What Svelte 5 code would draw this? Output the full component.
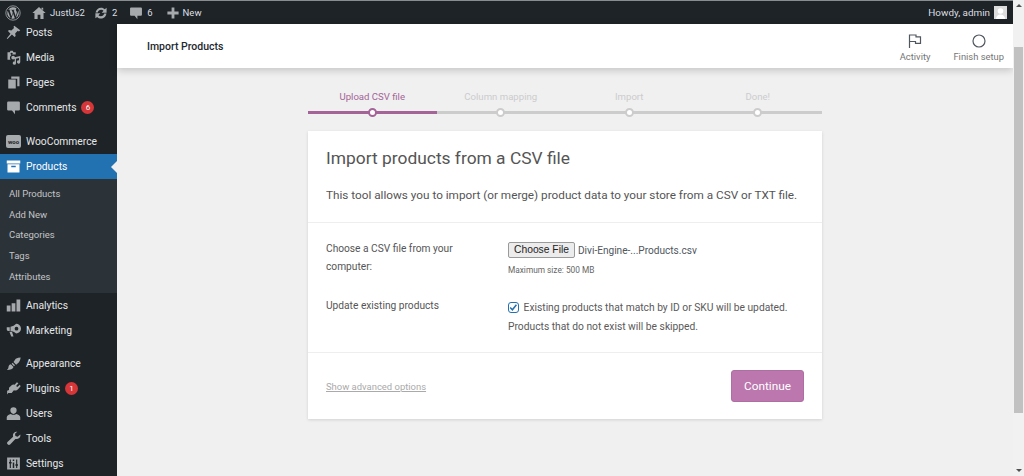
<script>
  const menuTop = [
    { label: 'Posts', icon: 'posts' },
    { label: 'Media', icon: 'media' },
    { label: 'Pages', icon: 'pages' },
    { label: 'Comments', icon: 'comments', badge: 6 },
  ]
  const subItems = ['All Products', 'Add New', 'Categories', 'Tags', 'Attributes']
  const menuBottom = [
    { label: 'Appearance', icon: 'appearance' },
    { label: 'Plugins', icon: 'plugins', badge: 1 },
    { label: 'Users', icon: 'users' },
    { label: 'Tools', icon: 'tools' },
    { label: 'Settings', icon: 'settings' },
  ]
  const steps = [
    { label: 'Upload CSV file', active: true },
    { label: 'Column mapping' },
    { label: 'Import' },
    { label: 'Done!' },
  ]
</script>

{#snippet icon(name)}
  <svg class="mi" viewBox="0 0 20 20" aria-hidden="true">
    {#if name === 'posts'}
      <path d="M11 1l8 6-1.800 1.500-1.600-.7-3.400 3.600.7 3.100-1.500 1.500-3.500-3.500L2 18.500 1 18l5-6.500-3.400-3.400L4 6.600l3.200.7L10.700 4 10 2.400z" />
    {:else if name === 'media'}
      <path fill-rule="evenodd" d="M2 3h3l1-2h3l1 2h3v3H9.500A4.500 4.500 0 0 0 6 13H2zm5.500.500a1.500 1.500 0 1 0 0 3 1.500 1.500 0 0 0 0-3z" />
      <path d="M9.500 7.500a2.500 2.500 0 1 1 0 5 2.500 2.500 0 0 1 0-5zM19 8v8a2.200 2.200 0 1 1-1.700-2.100V10.500l-4 1V17.500a2.200 2.200 0 1 1-1.700-2.100V9.500z" />
    {:else if name === 'pages'}
      <path d="M7 2h11v13h-3V5H7zM3 6h10v12H3z" />
    {:else if name === 'comments'}
      <path d="M3 2h14a1.500 1.500 0 0 1 1.500 1.500v9A1.500 1.500 0 0 1 17 14h-5v5l-4-5H3a1.500 1.500 0 0 1-1.500-1.500v-9A1.500 1.500 0 0 1 3 2z" />
    {:else if name === 'analytics'}
      <path d="M1 10h5v8H1zM7.500 7h5v11h-5zM14 2h5v16h-5z" />
    {:else if name === 'marketing'}
      <path fill-rule="evenodd" d="M13.500 1a6.500 6.500 0 0 1 0 13c-2-2-5-3-7.500-3.200V5C9 4.500 11.500 3 13.500 1zm.500 4a2.500 2.500 0 1 0 0 5 2.500 2.500 0 0 0 0-5z" />
      <path d="M1 5.500h4v5.200H3.500A2.500 2.500 0 0 1 1 8.500zM4.500 11.500h3.500l2 6.500H7z" />
    {:else if name === 'appearance'}
      <path d="M13 3.500c2-1 4.500-1.500 6.500-1.500-.2 2-1 4.500-2.500 6.500l-3.500 3-3.500-3.500zM8.800 9l3.200 3.200-1.300 1.300-3.200-3.200zM6.500 11l3.500 3.500c-.5 2.500-4 4-9 4 2.500-1.500 2-3.500 2.500-5s1.800-2.300 3-2.500z" />
    {:else if name === 'plugins'}
      <path d="M14.500 1.500l2 1.500-3 3.500 1.500 1.500 3.500-3 1 2-3.500 4a4.500 4.500 0 0 1-5.500 1.200l-3 3.800H3l-1.500 2v-5l2.500-1V9l3.500-3.500a4.500 4.500 0 0 1 4-.5z" />
    {:else if name === 'users'}
      <path d="M10 1.500a4.200 4.200 0 0 1 4.200 4.200c0 2.700-1.900 4.800-4.200 4.800S5.800 8.400 5.800 5.700A4.200 4.200 0 0 1 10 1.500zM6.500 10.500c2 1.500 5 1.500 7 0 3 .5 5.500 2.300 5.500 4.500v3.500H1V15c0-2.200 2.500-4 5.500-4.500z" />
    {:else if name === 'tools'}
      <path d="M15 1a5 5 0 0 0-5.500 6.500L2 14.500a2.500 2.500 0 0 0 3.500 3.500l7-7.500a5 5 0 0 0 6.500-6L15.500 7.500l-3-1-.5-3z" />
    {:else if name === 'settings'}
      <path fill-rule="evenodd" d="M1.500 2h17v16h-17zM5 4.500V8H4v2h1v6h1.500v-6h1V8h-1V4.500zm8.500 0V11h-1v2h1v3H15v-3h1v-2h-1V4.500zM9 4.500v2H11v-2zM9 8.500V16H11V8.500z" />
    {/if}
  </svg>
{/snippet}

<div class="wp">
  <div class="page">
    <header class="adminbar">
      <svg class="wplogo" viewBox="0 0 20 20" aria-hidden="true">
        <circle cx="10" cy="10" r="9" fill="none" stroke="currentColor" stroke-width="1" />
        <path d="M2.900 10a7.100 7.100 0 0 0 4 6.400L3.500 7.100A7 7 0 0 0 2.900 10zM14.800 9.600c0-.9-.3-1.500-.6-2-.4-.6-.7-1.100-.7-1.700 0-.6.5-1.200 1.200-1.200h.1A7.100 7.100 0 0 0 4.100 6.100h.5c.7 0 1.900-.1 1.900-.1.400 0 .4.500 0 .6 0 0-.4 0-.8.1l2.500 7.400 1.500-4.500-1.100-2.900c-.4 0-.7-.1-.7-.1-.4 0-.3-.6 0-.6 0 0 1.200.1 1.900.1s1.900-.1 1.900-.1c.4 0 .4.500 0 .6 0 0-.4 0-.8.1l2.500 7.400.7-2.300c.3-1 .5-1.600.5-2.200zM10.100 10.600l-2.100 6.200a7.100 7.100 0 0 0 4.400-.1l-.1-.1zM16.300 6.500c0 .2.100.5.100.7 0 .7-.1 1.500-.5 2.500l-2.200 6.300a7.100 7.100 0 0 0 2.600-9.500z" />
      </svg>
      <span class="abitem site">
        <svg viewBox="0 0 20 20" class="abi" aria-hidden="true"><path d="M10 1.500l9.500 8.500h-3v8.500H12V12.500H8v6H3.500V10h-3zM13.500 2.500h2.500v3.500l-2.500-2.200z" /></svg>
        JustUs2
      </span>
      <span class="abitem updates">
        <svg viewBox="0 0 20 20" class="abi" aria-hidden="true"><path d="M10.200 2.500c2 0 3.900.8 5.200 2.200L18 2.500v7h-7l2.600-2.600c-.9-.9-2.100-1.400-3.400-1.400-2.400 0-4.300 1.600-4.800 3.800H2.200C2.800 5.500 6.100 2.500 10.200 2.500zM2 10.500h7l-2.600 2.600c.9.900 2.100 1.400 3.400 1.400 2.400 0 4.300-1.600 4.800-3.800h3.200c-.6 4.300-3.900 7.300-8 7.300-2 0-3.900-.8-5.200-2.200L2 17.500z" /></svg>
        2
      </span>
      <span class="abitem comments">
        <svg viewBox="0 0 20 20" class="abi" aria-hidden="true"><path d="M3 2h14a1.500 1.500 0 0 1 1.500 1.500v9A1.500 1.500 0 0 1 17 14h-5v5l-4-5H3a1.500 1.500 0 0 1-1.500-1.500v-9A1.500 1.500 0 0 1 3 2z" /></svg>
        6
      </span>
      <span class="abitem new">
        <svg viewBox="0 0 20 20" class="abi" aria-hidden="true"><path d="M8 2h4v6h6v4h-6v6H8v-6H2V8h6z" /></svg>
        New
      </span>
      <span class="howdy">Howdy, admin <span class="avatar"><svg viewBox="0 0 13 13" aria-hidden="true"><rect width="13" height="13" fill="#dcdcdc" /><circle cx="6.500" cy="5" r="2.800" fill="#fff" /><path d="M2 13c0-3 2-4.500 4.500-4.500S11 10 11 13z" fill="#fff" /></svg></span></span>
    </header>

    <div class="body">
      <aside class="sidebar">
        <nav>
          {#each menuTop as m}
            <div class="mitem">
              {@render icon(m.icon)}
              <span>{m.label}</span>
              {#if m.badge}<b class="badge">{m.badge}</b>{/if}
            </div>
          {/each}
          <div class="mitem woo">
            <span class="wooicon">woo</span>
            <span>WooCommerce</span>
          </div>
          <div class="mitem current">
            <svg class="mi" viewBox="0 0 20 20" aria-hidden="true"><path fill-rule="evenodd" d="M1 2h18v4H1zM2 7h16v11H2zM7 9v2h6V9z" /></svg>
            <span>Products</span>
          </div>
          <ul class="sub">
            {#each subItems as s}<li>{s}</li>{/each}
          </ul>
          <div class="mitem">{@render icon('analytics')}<span>Analytics</span></div>
          <div class="mitem">{@render icon('marketing')}<span>Marketing</span></div>
          <div class="sep"></div>
          {#each menuBottom as m}
            <div class="mitem">
              {@render icon(m.icon)}
              <span>{m.label}</span>
              {#if m.badge}<b class="badge">{m.badge}</b>{/if}
            </div>
          {/each}
        </nav>
      </aside>

      <main class="content">
        <div class="wcbar">
          <h1>Import Products</h1>
          <div class="wcactions">
            <div class="wcaction">
              <svg viewBox="0 0 14 14" aria-hidden="true"><path d="M1.500 14V1h6.500v1.800h4.500v6.500H7.500V7.500h-6" fill="none" stroke="#50575e" stroke-width="1.200" /></svg>
              <span>Activity</span>
            </div>
            <div class="wcaction">
              <svg viewBox="0 0 14 14" aria-hidden="true"><circle cx="7" cy="7" r="6" fill="none" stroke="#50575e" stroke-width="1.200" /></svg>
              <span>Finish setup</span>
            </div>
          </div>
        </div>

        <div class="wizard">
          <ol class="steps">
            {#each steps as s}
              <li class:active={s.active}>
                <span class="steplabel">{s.label}</span>
                <span class="dot"></span>
              </li>
            {/each}
          </ol>

          <section class="card">
            <header class="cardhead">
              <h2>Import products from a CSV file</h2>
              <p>This tool allows you to import (or merge) product data to your store from a CSV or TXT file.</p>
            </header>
            <div class="cardbody">
              <div class="row first">
                <span class="rowlabel">Choose a CSV file from your computer:</span>
                <div>
                  <div class="file"><span class="filebtn">Choose File</span><span class="fname">Divi-Engine-...Products.csv</span></div>
                  <small>Maximum size: 500 MB</small>
                </div>
              </div>
              <div class="row">
                <span class="rowlabel">Update existing products</span>
                <div class="checktext">
                  <span class="check"><svg viewBox="0 0 9 9" aria-hidden="true"><path d="M1.200 4.500l2.200 2.300 4-5" fill="none" stroke="#2271b1" stroke-width="1.500" /></svg></span>
                  Existing products that match by ID or SKU will be updated. Products that do not exist will be skipped.
                </div>
              </div>
            </div>
            <footer class="cardfoot">
              <span class="advanced">Show advanced options</span>
              <span class="continue">Continue</span>
            </footer>
          </section>
        </div>
      </main>
    </div>
  </div>

  <div class="scrollbar">
    <span class="arrow up"></span>
    <span class="thumb"></span>
    <span class="arrow down"></span>
  </div>
</div>

<style>
  :global(body) {
    margin: 0;
    overflow: hidden;
  }
  .wp {
    width: 1024px;
    height: 476px;
    overflow: hidden;
    display: flex;
    font-family: Roboto, 'Noto Sans', sans-serif;
    background: #f0f0f1;
    color: #50575e;
  }
  .page {
    flex: 1;
    min-width: 0;
    display: flex;
    flex-direction: column;
  }
  .adminbar {
    height: 24px;
    flex: none;
    box-sizing: border-box;
    background: #1d2327;
    border-top: 1px solid #8a8d90;
    display: flex;
    align-items: center;
    color: #dcdfe1;
    font-size: 9.500px;
    padding-right: 6px;
  }
  .wplogo {
    width: 16px;
    height: 16px;
    fill: #a7aaad;
    color: #a7aaad;
    margin-left: 5px;
  }
  .abitem {
    display: flex;
    align-items: center;
    gap: 4px;
  }
  .abi {
    width: 14px;
    height: 14px;
    fill: #a7aaad;
  }
  .site {
    margin-left: 11px;
  }
  .updates {
    margin-left: 9px;
  }
  .comments {
    margin-left: 12px;
  }
  .new {
    margin-left: 13px;
    gap: 3px;
  }
  .howdy {
    margin-left: auto;
    display: flex;
    align-items: center;
    gap: 4px;
    font-size: 9.900px;
  }
  .avatar {
    width: 13px;
    height: 13px;
    display: block;
  }
  .avatar svg {
    display: block;
  }
  .body {
    flex: 1;
    display: flex;
    min-height: 0;
  }
  .sidebar {
    width: 117px;
    flex: none;
    background: #1d2327;
    color: #e6e7e8;
    font-size: 10.300px;
    overflow: hidden;
  }
  .mitem {
    height: 25px;
    display: flex;
    align-items: center;
    padding-left: 6px;
    position: relative;
  }
  .mitem:first-child {
    margin-top: -4px;
  }
  .mi {
    width: 15px;
    height: 15px;
    fill: #a7aaad;
    margin-right: 5px;
    flex: none;
  }
  .woo {
    margin-top: 9px;
  }
  .wooicon {
    width: 15px;
    height: 13px;
    border-radius: 2px;
    background: #a7aaad;
    color: #1d2327;
    font-size: 6px;
    font-weight: 700;
    line-height: 13px;
    text-align: center;
    margin-right: 5px;
    flex: none;
  }
  .badge {
    width: 13px;
    height: 13px;
    border-radius: 50%;
    background: #d63638;
    color: #fff;
    font-size: 8px;
    font-weight: 400;
    line-height: 13px;
    text-align: center;
    margin-left: 5px;
  }
  .current {
    background: #2271b1;
    color: #fff;
  }
  .current .mi {
    fill: #fff;
  }
  .current::after {
    content: '';
    position: absolute;
    right: 0;
    top: 7px;
    border: 6px solid transparent;
    border-left: 0;
    border-right-color: #f0f0f1;
  }
  .sub {
    list-style: none;
    margin: 0;
    padding: 5px 0 6px 9px;
    background: #2c3338;
    color: #c3c4c7;
    font-size: 9.500px;
  }
  .sub li {
    height: 20.700px;
    line-height: 20.700px;
  }
  .sep {
    height: 8px;
  }
  .content {
    flex: 1;
    min-width: 0;
  }
  .wcbar {
    height: 44px;
    background: #fff;
    display: flex;
    align-items: center;
    justify-content: space-between;
    padding-left: 30px;
    padding-right: 9px;
    box-shadow: 0 2px 8px rgba(0, 0, 0, 0.2);
    position: relative;
  }
  h1 {
    margin: 0;
    font-size: 10.500px;
    font-weight: 500;
    color: #23282d;
  }
  .wcactions {
    display: flex;
    gap: 23px;
    padding-top: 3px;
  }
  .wcaction {
    display: flex;
    flex-direction: column;
    align-items: center;
    font-size: 9.400px;
    color: #757575;
  }
  .wcaction svg {
    width: 14px;
    height: 14px;
    margin-bottom: 3px;
  }
  .wizard {
    width: 514px;
    margin: 20px 0 0 191px;
  }
  .steps {
    list-style: none;
    margin: 0;
    padding: 0;
    display: grid;
    grid-template-columns: repeat(4, 1fr);
  }
  .steps li {
    position: relative;
    text-align: center;
    color: #ccc;
    font-size: 9.600px;
    height: 23px;
    border-bottom: 3px solid #ccc;
  }
  .steps li.active {
    color: #a46497;
    border-bottom-color: #a46497;
  }
  .steplabel {
    display: block;
    line-height: 18px;
  }
  .dot {
    position: absolute;
    left: 50%;
    bottom: -6px;
    width: 5px;
    height: 5px;
    margin-left: -4.500px;
    border: 2px solid #ccc;
    border-radius: 50%;
    background: #fff;
  }
  .active .dot {
    border-color: #a46497;
  }
  .card {
    background: #fff;
    margin-top: 17px;
    box-shadow: 0 1px 3px rgba(0, 0, 0, 0.13);
  }
  .cardhead {
    padding: 16px 18px 19px;
    border-bottom: 1px solid #eee;
  }
  h2 {
    margin: 0;
    font-size: 17.400px;
    font-weight: 400;
    line-height: 23px;
    color: #555;
  }
  .cardhead p {
    margin: 17px 0 0;
    font-size: 11.750px;
    line-height: 16px;
    color: #555;
    white-space: nowrap;
  }
  .cardbody {
    padding: 17px 18px 0;
    height: 130px;
    box-sizing: border-box;
    border-bottom: 1px solid #eee;
  }
  .row {
    display: grid;
    grid-template-columns: 182px 1fr;
  }
  .first {
    height: 58px;
  }
  .rowlabel {
    line-height: 18px;
    color: #555;
    font-size: 10.200px;
    padding-right: 30px;
  }
  .row:last-child .rowlabel {
    line-height: 16px;
  }
  .file {
    display: flex;
    align-items: center;
    margin-top: 2px;
  }
  .filebtn {
    font-family: 'Liberation Sans', Arial, sans-serif;
    font-size: 10.300px;
    line-height: 14px;
    color: #222;
    background: #ececec;
    border: 1px solid #9a9a9a;
    border-radius: 2px;
    padding: 0 5px;
  }
  .fname {
    margin-left: 3px;
    font-size: 10.100px;
  }
  small {
    display: block;
    font-size: 8.300px;
    line-height: 12px;
    margin-top: 6px;
    color: #666;
  }
  .checktext {
    line-height: 19px;
    font-size: 10.280px;
    color: #5a5a5a;
  }
  .check {
    display: inline-block;
    width: 9px;
    height: 9px;
    border: 1.500px solid #2271b1;
    border-radius: 3px;
    vertical-align: -2px;
    margin-right: 2px;
  }
  .check svg {
    display: block;
  }
  .cardfoot {
    display: flex;
    justify-content: space-between;
    align-items: center;
    padding: 17px 18px;
  }
  .advanced {
    font-size: 9.450px;
    color: #aaa;
    text-decoration: underline;
  }
  .continue {
    width: 73px;
    height: 32px;
    background: #bb77ae;
    border-radius: 3px;
    color: #fff;
    font-size: 11.800px;
    line-height: 30px;
    text-align: center;
    box-sizing: border-box;
    border: 1px solid #ad6ea1;
  }
  .scrollbar {
    width: 11px;
    flex: none;
    background: #f1f1f1;
    position: relative;
  }
  .arrow {
    position: absolute;
    left: 3px;
    border: 3px solid transparent;
  }
  .up {
    top: 4px;
    border-top: 0;
    border-bottom: 3px solid #505050;
  }
  .down {
    bottom: 4px;
    border-bottom: 0;
    border-top: 3px solid #505050;
  }
  .thumb {
    position: absolute;
    left: 1px;
    right: 1px;
    top: 47px;
    height: 366px;
    background: #c1c1c1;
  }
</style>
